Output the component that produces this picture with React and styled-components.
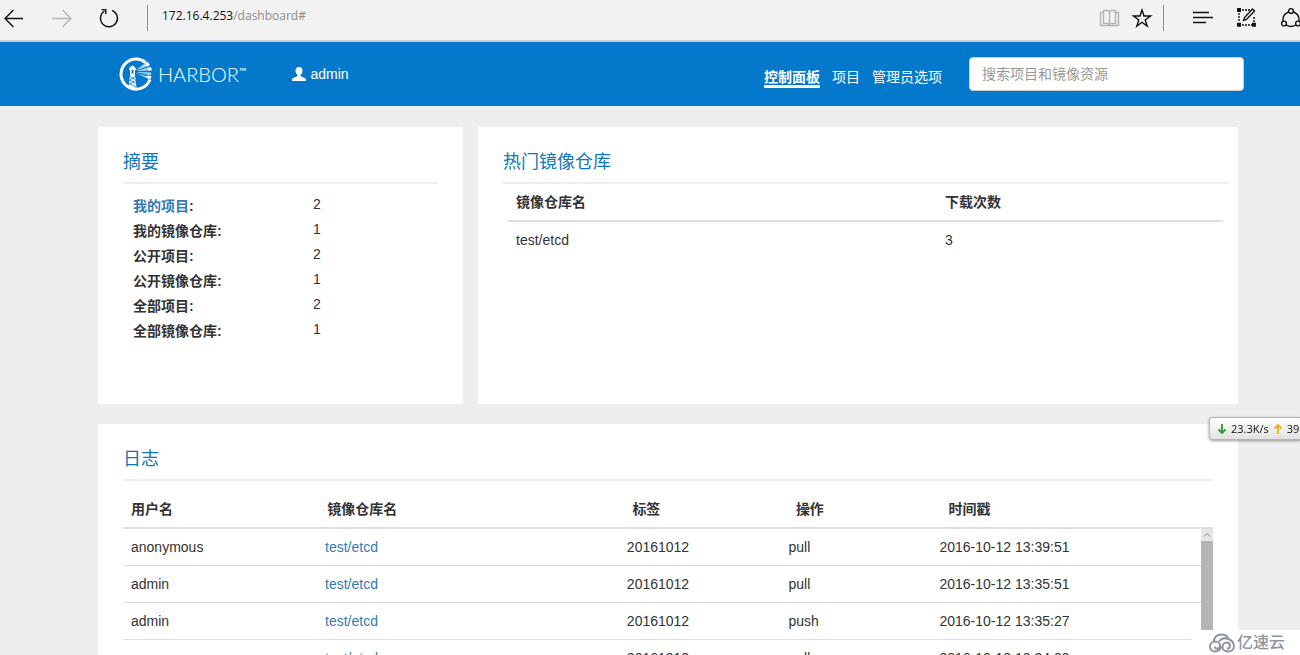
import React from 'react'
import styled, { createGlobalStyle } from 'styled-components'

const summary = [
  { label: '我的项目', count: 2, href: '#my-projects' },
  { label: '我的镜像仓库', count: 1 },
  { label: '公开项目', count: 2 },
  { label: '公开镜像仓库', count: 1 },
  { label: '全部项目', count: 2 },
  { label: '全部镜像仓库', count: 1 },
]

const topRepositories = [{ name: 'test/etcd', downloads: 3 }]

const logs = [
  { user: 'anonymous', repo: 'test/etcd', tag: '20161012', operation: 'pull', time: '2016-10-12 13:39:51' },
  { user: 'admin', repo: 'test/etcd', tag: '20161012', operation: 'pull', time: '2016-10-12 13:35:51' },
  { user: 'admin', repo: 'test/etcd', tag: '20161012', operation: 'push', time: '2016-10-12 13:35:27' },
  { user: 'anonymous', repo: 'test/etcd', tag: '20161012', operation: 'pull', time: '2016-10-12 13:34:09' },
]

const App = () => {
  return (
    <Window>
      <GlobalStyle />
      <BrowserBar />
      <Header />
      <Main>
        <Summary />
        <TopRepositories />
        <Logs />
      </Main>
      <NetworkSpeed />
      <Watermark />
    </Window>
  )
}

const BrowserBar = () => {
  return (
    <Toolbar>
      <ToolGroup $gap={28}>
        <ToolButton aria-label='back'>
          <svg width='20' height='20' viewBox='0 0 20 20'>
            <path d='M19 10.5H1M9.5 2 1 10.5 9.5 19' />
          </svg>
        </ToolButton>
        <ToolButton aria-label='forward' $muted>
          <svg width='20' height='20' viewBox='0 0 20 20'>
            <path d='M0 10.5h18.5M10.5 2l8.5 8.5-8.5 8.5' />
          </svg>
        </ToolButton>
        <ToolButton aria-label='refresh'>
          <svg width='20' height='20' viewBox='0 0 20 20'>
            <path d='M12 2.3A8.5 8.5 0 1 1 4.5 3M1.5 1.6h4.3v4.4' />
          </svg>
        </ToolButton>
      </ToolGroup>
      <Divider />
      <Address>
        172.16.4.253<span>/dashboard#</span>
      </Address>
      <ToolGroup $gap={12}>
        <ToolButton aria-label='reading view' $muted>
          <svg width='20' height='20' viewBox='0 0 20 20'>
            <path d='M4.5 2.5h4l1.500 1 1.500-1h5v13h-5l-1.500 1-1.500-1h-4zM10.500 3.500v13M4.500 4.500h-3v13h18v-13h-3' />
          </svg>
        </ToolButton>
        <ToolButton aria-label='favorites'>
          <svg width='20' height='20' viewBox='0 0 20 20'>
            <path d='M11 2l2 6h6.500l-5.300 3.900 2 6.200-5.200-3.800-5.200 3.800 2-6.200L2.500 8H9z' />
          </svg>
        </ToolButton>
      </ToolGroup>
      <Divider />
      <ToolGroup $gap={24}>
        <ToolButton aria-label='hub'>
          <svg width='20' height='20' viewBox='0 0 20 20'>
            <path d='M1 4.500h16M1 9.500h20M1 14.500h13' />
          </svg>
        </ToolButton>
        <ToolButton aria-label='web note'>
          <svg width='20' height='20' viewBox='-1 0 20 20'>
            <path d='M5 2h9M2 5v9M5 17h10M17 9v5' strokeDasharray='2 1' />
            <path d='M.8.800h2.500v2.500H.8zM.8 15.500h2.500V18H.8zM15.700 15.500h2.500V18h-2.500z' fill='#111111' />
            <path d='M6.500 12.500l1-3L15.500 1l2 2-8 8.500z' />
          </svg>
        </ToolButton>
        <ToolButton aria-label='share'>
          <svg width='20' height='20' viewBox='-1 0 20 20'>
            <circle cx='10' cy='3' r='2.400' />
            <circle cx='3' cy='15.500' r='2.400' />
            <circle cx='17' cy='15.500' r='2.400' />
            <path d='M7.500 4C3.500 5.500 1.700 9 2 13M12.500 4c4 1.500 5.800 5 5.500 9M5.300 17c3 2 6.400 2 9.400 0' />
          </svg>
        </ToolButton>
      </ToolGroup>
    </Toolbar>
  )
}

const Header = () => {
  return (
    <HeaderBar>
      <Brand href='#'>
        <LighthouseLogo />
        HARBOR<sup>™</sup>
      </Brand>
      <UserLink href='#admin'>
        <svg width='14' height='14' viewBox='0 0 14 14' fill='#ffffff'>
          <path d='M7 0C4.800 0 3.400 1.500 3.500 3.700c.1 1.900.9 3.200 1.900 4v1.200C4.800 9.800.6 10.600.2 12c-.2.700-.2 1.300-.2 2h14c0-.7 0-1.300-.2-2-.4-1.400-4.600-2.200-5.200-3.100V7.700c1-.8 1.800-2.100 1.900-4C10.600 1.500 9.200 0 7 0z' />
        </svg>
        admin
      </UserLink>
      <Nav>
        <NavLink href='#dashboard' $active>
          控制面板
        </NavLink>
        <NavLink href='#project'>项目</NavLink>
        <NavLink href='#admin-option'>管理员选项</NavLink>
      </Nav>
      <SearchInput type='text' aria-label='搜索' placeholder='搜索项目和镜像资源' />
    </HeaderBar>
  )
}

const LighthouseLogo = () => {
  return (
    <svg width='34' height='34' viewBox='0 0 34 34' fill='none'>
      <path d='M26.500 5.500A15 15 0 1 0 31 22.500' stroke='#ffffff' strokeWidth='3' />
      <path d='M17 13L27 5.500l3 3.500zM17 14l14-4 1 3.500zM17 15l15 .5v3zM17 16l14 4-1.500 2z' fill='#a9d5f2' />
      <path d='M26 6.500l2.500-2 2.500 3.500-3 1.500zM29 11l3-.8 1 3-3.500.3zM28 18.500l4.500.8-1 3-4-2z' fill='#ffffff' />
      <path d='M10 13c0-2.500 1.500-3.500 3.500-4.500C15.500 9.500 17 10.500 17 13h-1v5l1.500 13h-8L11 18v-5z' fill='#ffffff' />
      <path d='M12.500 13h2v3.500h-2z' fill='#0479cb' />
      <path
        d='M11 19.500l5 3M10.500 23l6 3.500M10.500 26.500l6.500 3.500M16 19.500l-5.500 4M16.500 23.500l-6.500 4'
        stroke='#0479cb'
        strokeWidth='.8'
      />
    </svg>
  )
}

const Summary = () => {
  return (
    <Card>
      <Title>摘要</Title>
      <SummaryList>
        {summary.map(({ label, count, href }) => {
          return (
            <React.Fragment key={label}>
              <dt>{href ? <TextLink href={href}>{label}</TextLink> : label}:</dt>
              <dd>{count}</dd>
            </React.Fragment>
          )
        })}
      </SummaryList>
    </Card>
  )
}

const TopRepositories = () => {
  return (
    <Card $wide>
      <Title>热门镜像仓库</Title>
      <TableInset>
        <Table>
          <colgroup>
            <Column $width={60} />
            <Column $width={40} />
          </colgroup>
          <thead>
            <tr>
              <th>镜像仓库名</th>
              <th>下载次数</th>
            </tr>
          </thead>
          <tbody>
            {topRepositories.map(({ name, downloads }) => {
              return (
                <tr key={name}>
                  <td>{name}</td>
                  <td>{downloads}</td>
                </tr>
              )
            })}
          </tbody>
        </Table>
      </TableInset>
    </Card>
  )
}

const LogColumns = () => {
  return (
    <colgroup>
      {[18, 28, 15, 14, 25].map((width, index) => {
        return <Column key={index} $width={width} />
      })}
    </colgroup>
  )
}

const Logs = () => {
  return (
    <LogCard>
      <Title>日志</Title>
      <LogHead>
        <LogColumns />
        <thead>
          <tr>
            <th>用户名</th>
            <th>镜像仓库名</th>
            <th>标签</th>
            <th>操作</th>
            <th>时间戳</th>
          </tr>
        </thead>
      </LogHead>
      <LogBody>
        <Table $lined>
          <LogColumns />
          <tbody>
            {logs.map(({ user, repo, tag, operation, time }) => {
              return (
                <tr key={time}>
                  <td>{user}</td>
                  <td>
                    <TextLink href='#repo'>{repo}</TextLink>
                  </td>
                  <td>{tag}</td>
                  <td>{operation}</td>
                  <td>{time}</td>
                </tr>
              )
            })}
          </tbody>
        </Table>
        <ScrollTrack>
          <ScrollButton aria-label='scroll up'>
            <svg width='8' height='6' viewBox='0 0 8 6' fill='none' stroke='#8a8a8a'>
              <path d='M1 4.500l3-3 3 3' />
            </svg>
          </ScrollButton>
          <ScrollThumb />
        </ScrollTrack>
      </LogBody>
    </LogCard>
  )
}

const NetworkSpeed = () => {
  return (
    <SpeedBox>
      <svg width='10' height='12' viewBox='0 0 10 12' fill='none' stroke='#2a9a2a' strokeWidth='1.800'>
        <path d='M5 1v9M1.500 6.500L5 10l3.500-3.500' />
      </svg>
      <span>23.3K/s</span>
      <svg width='10' height='12' viewBox='0 0 10 12' fill='none' stroke='#f0b010' strokeWidth='1.800'>
        <path d='M5 11V2M1.500 5.500L5 2l3.500 3.500' />
      </svg>
      <span>39</span>
    </SpeedBox>
  )
}

const Watermark = () => {
  return (
    <WatermarkBox>
      <svg width='26' height='20' viewBox='0 0 26 20' fill='none' stroke='#8f959f' strokeWidth='2'>
        <path d='M5 9C4.500 4.500 8 1.500 12.500 1.500c3.500 0 6 1.800 7 4.800' />
        <path d='M12.500 13c-1 3.500-3.500 5.500-6.500 5.500-2.800 0-5-2-5-5s2.200-5 5-5c3 0 5 2 5 4.300 0 2-1.300 3-2.800 3S6 15 6 13.500' />
        <path d='M10 8.500c2-3 6-4 9.500-2.500 3.300 1.400 5.500 3.700 5.500 7 0 3.300-2.500 5.500-5.800 5.500-3.400 0-5.700-2-5.700-4.800 0-2.400 1.800-4.200 4-4.200 2 0 3.500 1.400 3.500 3.200s-1.200 3-3 3' />
      </svg>
      亿速云
    </WatermarkBox>
  )
}

const GlobalStyle = createGlobalStyle`
  * {
    box-sizing: border-box;
  }
  body {
    margin: 0;
    background: #eeeeee;
    color: #333333;
    font-family: 'Liberation Sans', 'Noto Sans CJK SC', sans-serif;
    font-size: 14px;
    line-height: 20px;
  }
  a {
    text-decoration: none;
  }
`

const Window = styled.div`
  height: 100vh;
  overflow: hidden;
`

const Toolbar = styled.div`
  display: flex;
  align-items: flex-start;
  height: 42px;
  padding: 5px 0 0 4px;
  background: #f2f2f2;
  border-bottom: 2px solid #c9cdd1;
`

const ToolGroup = styled.div`
  display: flex;
  gap: ${(props) => props.$gap}px;
  padding-top: 3px;
`

const ToolButton = styled.button`
  width: 20px;
  height: 20px;
  padding: 0;
  border: 0;
  background: none;
  svg {
    display: block;
    fill: none;
    overflow: visible;
    stroke: ${(props) => (props.$muted ? '#b4b4b4' : '#111111')};
    stroke-width: 1.4;
  }
`

const Divider = styled.div`
  width: 1px;
  height: 26px;
  margin: 0 28px 0 12px;
  background: #8c8c8c;
  ${ToolGroup}:first-child + & {
    margin: 0 14px 0 27px;
  }
`

const Address = styled.div`
  flex: 1;
  color: #111111;
  font-family: 'Open Sans', 'Noto Sans', sans-serif;
  font-size: 12px;
  line-height: 22px;
  span {
    color: #8c8c8c;
  }
`

const HeaderBar = styled.header`
  display: flex;
  align-items: center;
  height: 64px;
  padding: 0 56px 0 119px;
  background: #0479cb;
`

const Brand = styled.a`
  display: flex;
  align-items: center;
  color: #ffffff;
  font-family: Lato, sans-serif;
  font-size: 20px;
  font-weight: 300;
  svg {
    margin-right: 5px;
  }
  sup {
    padding-bottom: 6px;
    font-size: 10px;
    font-weight: 400;
    line-height: 12px;
  }
`

const UserLink = styled.a`
  display: flex;
  align-items: center;
  gap: 4px;
  margin-left: 46px;
  color: #ffffff;
`

const Nav = styled.nav`
  display: flex;
  gap: 12px;
  margin: 0 27px 0 auto;
  padding-top: 9px;
`

const NavLink = styled.a`
  border-bottom: 3px solid ${(props) => (props.$active ? '#ffffff' : 'transparent')};
  color: #ffffff;
  font-weight: ${(props) => (props.$active ? 'bold' : 'normal')};
  line-height: 16px;
`

const SearchInput = styled.input`
  width: 275px;
  height: 34px;
  padding: 6px 12px;
  border: 1px solid #cccccc;
  border-radius: 4px;
  background: #ffffff;
  font: inherit;
  &::placeholder {
    color: #999999;
  }
`

const Main = styled.main`
  display: grid;
  grid-template-columns: 365fr 760fr;
  gap: 20px 15px;
  margin: 21px 62px 0 98px;
`

const Card = styled.section`
  min-height: 277px;
  padding: 25px ${(props) => (props.$wide ? 10 : 25)}px 25px 25px;
  background: #ffffff;
`

const LogCard = styled(Card)`
  grid-column: 1 / -1;
`

const Title = styled.h4`
  margin: 0;
  padding-bottom: 10px;
  border-bottom: 2px solid #eeeeee;
  color: #0f75bd;
  font-size: 18px;
  font-weight: normal;
  line-height: 20px;
`

const TextLink = styled.a`
  color: #337ab7;
`

const SummaryList = styled.dl`
  display: grid;
  grid-template-columns: 180px 1fr;
  grid-auto-rows: 25px;
  margin: 10px 10px 0;
  dt {
    font-weight: bold;
    line-height: 24px;
  }
  dd {
    margin: 0;
  }
`

const Table = styled.table`
  width: 100%;
  border-collapse: separate;
  border-spacing: 0;
  table-layout: fixed;
  th,
  td {
    padding: 8px;
    text-align: left;
    line-height: 20px;
  }
  th {
    border-bottom: 2px solid #dddddd;
  }
  td {
    border-bottom: ${(props) => (props.$lined ? '1px solid #dddddd' : '0')};
  }
`

const Column = styled.col`
  width: ${(props) => props.$width}%;
`

const TableInset = styled.div`
  padding: 0 5px;
`

const LogHead = styled(Table)`
  margin-top: 10px;
`

const LogBody = styled.div`
  display: flex;
  align-items: flex-start;
`

const ScrollTrack = styled.div`
  display: flex;
  flex-direction: column;
  align-self: stretch;
  flex: 0 0 12px;
`

const ScrollButton = styled.button`
  display: flex;
  align-items: center;
  justify-content: center;
  height: 12px;
  padding: 0;
  border: 0;
  background: #e6e6e6;
`

const ScrollThumb = styled.div`
  flex: 1;
  background: #b5b5b5;
`

/* desktop widget hanging over the right edge of the page */
const SpeedBox = styled.div`
  position: fixed;
  top: 417px;
  right: 0;
  display: flex;
  align-items: center;
  gap: 4px;
  width: 91px;
  height: 23px;
  padding-left: 7px;
  overflow: hidden;
  border: 1px solid #b4b4b4;
  border-right: 0;
  border-radius: 4px 0 0 4px;
  background: linear-gradient(#ffffff, #e2e2e2);
  box-shadow: 0 1px 3px rgba(0, 0, 0, 0.4);
  color: #111111;
  font-family: 'Open Sans', 'Noto Sans', sans-serif;
  font-size: 11px;
`

const WatermarkBox = styled.div`
  position: fixed;
  right: 0;
  bottom: 0;
  display: flex;
  align-items: center;
  gap: 2px;
  width: 109px;
  height: 25px;
  padding-left: 18px;
  background: #ffffff;
  color: #8f959f;
  font-size: 16px;
  font-weight: 500;
  line-height: 24px;
`

export default App
